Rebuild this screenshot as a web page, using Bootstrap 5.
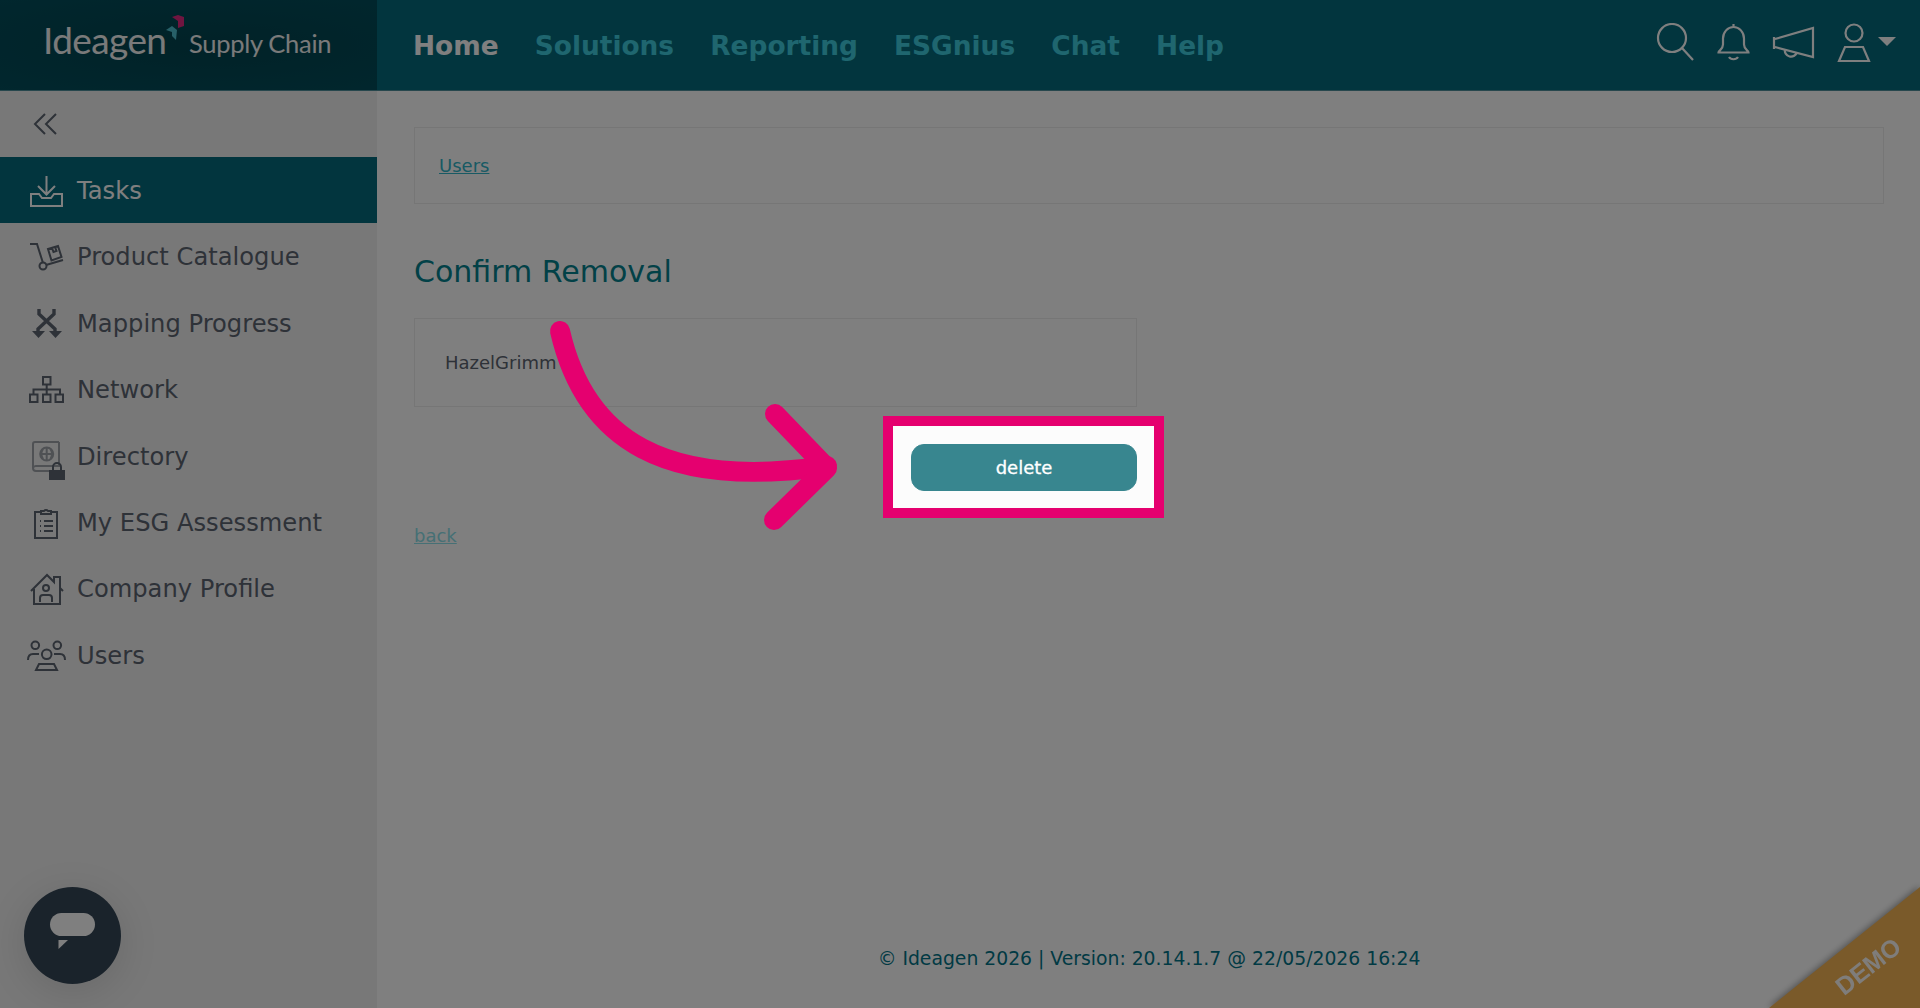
<!DOCTYPE html>
<html lang="en">
<head>
  <meta charset="UTF-8">
  <title>Ideagen Supply Chain - Confirm Removal</title>
  <meta name="viewport" content="width=device-width, initial-scale=1">
  <link href="https://cdn.jsdelivr.net/npm/bootstrap@5.3.0/dist/css/bootstrap.min.css" rel="stylesheet">
  <style>
    html, body { height: 100%; }
    body { font-family: "DejaVu Sans", sans-serif; font-size: 18px; background: #fff; overflow: hidden; color: #5c6470; }

    /* header */
    .top-bar { height: 91px; background: #046a7c; border-bottom: 1px solid #4f8f9a; flex-shrink: 0; }
    .logo-box { width: 377px; height: 90px; background: radial-gradient(ellipse at 55% 50%, #02444f 0%, #024e5c 100%); position: relative; }
    .logo-main { position: absolute; left: 43px; top: 13px; font-family: Lato, sans-serif; font-weight: 400; font-size: 37px; letter-spacing: -.6px; color: #f4f4f4; line-height: 54px; }
    .logo-sub { position: absolute; left: 189px; top: 23px; font-family: Lato, sans-serif; font-weight: 400; font-size: 25.5px; letter-spacing: -.3px; color: #f4f4f4; line-height: 40px; }
    .logo-mark { position: absolute; left: 0; top: 0; }
    .main-nav { padding-left: 36px; gap: 36.200px; }
    .main-nav a { font-size: 26.4px; font-weight: 700; color: #3eccdf; text-decoration: none; line-height: 92px; }
    .main-nav a.is-on { color: #fff; }
    .top-icons { padding-right: 18px; color: #fff; }
    .top-icons svg { display: block; height: 44px; fill: none; stroke: currentColor; stroke-width: 2.2; }

    /* sidebar */
    .side-col { width: 377px; background: #f0f0f0; flex-shrink: 0; }
    .side-toggle { height: 66px; padding-left: 33px; color: #5c6470; }
    .side-link { height: 66.4px; padding: 2px 0 0 28px; gap: 9px; font-size: 24.2px; color: #5c6470; }
    .side-link:hover { color: #5c6470; }
    .side-link.is-on { background: #046a7c; color: #fff; }
    .side-link svg { width: 40px; height: 46px; flex-shrink: 0; overflow: visible; fill: none; stroke: currentColor; stroke-width: 2; }
    .side-link svg .heavy { stroke-width: 3.4; }

    /* main */
    .content-col { padding: 36px 36px 0 37px; min-width: 0; }
    .crumb-box { height: 77px; border: 1px solid #ececec; padding-left: 24px; }
    .crumb-box a { color: #30b4c8; }
    .page-title { font-size: 30px; font-weight: 400; color: #04828f; margin: 50px 0 0; line-height: 36px; }
    .user-box { width: 723px; height: 89px; margin-top: 28px; border: 1px solid #ececec; padding-left: 30px; color: #5c6470; }
    .action-row { width: 723px; margin-top: 9px; }
    .spot-box { position: relative; z-index: 20; margin-right: -27px; border: 10px solid #e5006f; padding: 18px 17px 17px 18px; background: #fcfcfc; box-shadow: 0 0 0 3000px rgba(0,0,0,.5); }
    .btn-delete { width: 226px; height: 47px; padding: 0; border-radius: 13px; background: #38868f; border-color: #38868f; color: #fff; font-size: 18px; -webkit-text-stroke: .3px #fff; }
    .back-link { display: inline-block; margin-top: 4px; color: #8ce0ea; }
    .page-foot { padding-bottom: 36px; font-size: 18.8px; color: #027488; line-height: 27px; }

    /* things lying over the page */
    .chat-bubble { position: fixed; left: 24px; bottom: 24px; width: 97px; height: 97px; z-index: 5; border-radius: 50%; background: #344656; box-shadow: 0 8px 40px rgba(0,0,0,.12); }
    .chat-bubble svg { display: block; }
    .demo-tag { position: fixed; right: 0; bottom: 0; width: 151px; height: 121px; z-index: 5; filter: drop-shadow(-1px -1px 3px rgba(0,0,0,.35)); }
    .demo-fill { width: 100%; height: 100%; background: #f4b454; clip-path: polygon(100% 0, 100% 100%, 0 100%); position: relative; }
    .demo-text { position: absolute; left: 54px; top: 65px; width: 90px; text-align: center; font-family: "Liberation Sans", sans-serif; font-weight: 700; font-size: 25px; line-height: 28px; color: #fff; opacity: .95; transform: rotate(-38deg); }
    .pointer-arrow { position: fixed; left: 0; top: 0; z-index: 30; pointer-events: none; }
  </style>
</head>
<body class="d-flex flex-column">

  <!-- Header -->
  <header class="top-bar d-flex">
    <div class="logo-box">
      <span class="logo-main">Ideagen</span>
      <span class="logo-sub">Supply Chain</span>
      <svg class="logo-mark" width="200" height="50">
        <polygon points="172,17 178,15 184,17 184,26 178,28 178,21" fill="#e02a80"/>
        <polygon points="166,30 172,26 177,30 176,40 172,36 172,32" fill="#4ec0d0"/>
      </svg>
    </div>
    <nav class="main-nav d-flex">
      <a href="#" class="is-on">Home</a>
      <a href="#">Solutions</a>
      <a href="#">Reporting</a>
      <a href="#">ESGnius</a>
      <a href="#">Chat</a>
      <a href="#">Help</a>
    </nav>
    <div class="top-icons d-flex align-items-center ms-auto">
      <svg width="58" viewBox="0 0 58 44"><circle cx="16" cy="15" r="14"/><path d="M26 25l11 12"/></svg>
      <svg width="56" viewBox="0 0 56 44"><path d="M19.5 1v3M4.5 29.5c0-2 4.5-3 4.5-8v-6a10.5 11.5 0 0 1 21 0v6c0 5 4.5 6 4.5 8z"/><path d="M15 34a5 4 0 0 0 9 0"/></svg>
      <svg width="66" viewBox="0 0 66 44"><path d="M4 14v12M5 16L43 5v29L5 24M15 26a6 6 0 0 0 12 3"/></svg>
      <svg width="42" viewBox="0 0 42 44"><circle cx="18" cy="10" r="8.5"/><path d="M9 24h18l6 14H3z"/></svg>
      <svg width="24" viewBox="0 0 24 44"><polygon points="0,14 18,14 9,23" fill="currentColor" stroke="none"/></svg>
    </div>
  </header>

  <div class="d-flex flex-grow-1">
    <!-- Sidebar -->
    <aside class="side-col">
      <div class="side-toggle d-flex align-items-center">
        <svg width="26" height="26" viewBox="0 0 26 26" fill="none" stroke="currentColor" stroke-width="2"><path d="M12 3L2 13l10 10M23 3L13 13l10 10"/></svg>
      </div>
      <nav class="nav flex-column">
        <a class="nav-link side-link is-on d-flex align-items-center" href="#">
          <svg viewBox="0 -5 40 46"><path d="M18.5 3v18M10 13l8.5 8.500L27 13M3 21h8l3 4h9l3-4h8v12H3z"/></svg>Tasks
        </a>
        <a class="nav-link side-link d-flex align-items-center" href="#">
          <svg viewBox="0 -5 40 46"><path d="M2 4h7l6 19M18 25l17-5M20 9l10-3 3.500 11-10 3.500zM24 8l1.500 4 3-1-1.500-4"/><circle cx="15" cy="26" r="3.500"/></svg>Product Catalogue
        </a>
        <a class="nav-link side-link d-flex align-items-center" href="#">
          <svg viewBox="0 -5 40 46"><path class="heavy" d="M11 3v5l16 15v4M26 3v5L10 23v4"/><path d="M4 25h13l-6.500 7zM21 25h13l-6.500 7z" fill="currentColor" stroke="none"/></svg>Mapping Progress
        </a>
        <a class="nav-link side-link d-flex align-items-center" href="#">
          <svg viewBox="0 -5 40 46"><path d="M15 5h7.500v7.500H15zM2 22.500h7.500V30H2zM15 22.500h7.500V30H15zM27.500 22.500H35V30h-7.500zM18.700 12.500v10M5.500 22.500v-5h26.500v5"/></svg>Network
        </a>
        <a class="nav-link side-link d-flex align-items-center" href="#">
          <svg viewBox="0 -5 40 46"><g opacity=".55"><path d="M31 3H7a2 2 0 0 0-2 2v24a3 3 0 0 0 3 3h15M31 3v24H8a3 3 0 0 0-3 2"/><circle cx="18.700" cy="15" r="6.500"/><path d="M12.200 15h13M18.700 8.500v13M15 10c-2 3-2 7 0 10M22.400 10c2 3 2 7 0 10"/></g><path d="M21 31h16v10H21z" fill="currentColor" stroke="none"/><path d="M25 31v-3a4 4 0 0 1 8 0v3"/></svg>Directory
        </a>
        <a class="nav-link side-link d-flex align-items-center" href="#">
          <svg viewBox="0 -5 40 46"><path d="M13 7H7v26h22V7h-6M13 9V6h3a2.500 2.500 0 0 1 4 0h3v3zM12 16h1M12 21h1M12 26h1M16 16h9M16 21h9M16 26h9"/></svg>My ESG Assessment
        </a>
        <a class="nav-link side-link d-flex align-items-center" href="#">
          <svg viewBox="0 -5 40 46"><path d="M3 19L19 3l7 7V5h6v11l3 3M6 17v15h26V14M12 30v-4a3 3 0 0 1 3-3h6a3 3 0 0 1 3 3v4"/><circle cx="18" cy="16" r="3"/></svg>Company Profile
        </a>
        <a class="nav-link side-link d-flex align-items-center" href="#">
          <svg viewBox="0 -5 40 46"><circle cx="7.300" cy="7.300" r="3.800"/><circle cx="29.300" cy="7.300" r="3.800"/><circle cx="18.700" cy="16.300" r="4.800"/><path d="M0 22c0-4 2-6 5-6h6M37 22c0-4-2-6-5-6h-6M11 26h15l3 6H8z"/></svg>Users
        </a>
      </nav>
    </aside>

    <!-- Content -->
    <main class="content-col flex-grow-1 d-flex flex-column">
      <div class="crumb-box d-flex align-items-center">
        <a href="#">Users</a>
      </div>
      <h1 class="page-title">Confirm Removal</h1>
      <div class="user-box d-flex align-items-center">HazelGrimm</div>
      <div class="action-row d-flex justify-content-end">
        <div class="spot-box">
          <button type="button" class="btn btn-delete d-block">delete</button>
        </div>
      </div>
      <div><a href="#" class="back-link">back</a></div>
      <footer class="page-foot mt-auto text-center">© Ideagen 2026 | Version: 20.14.1.7 @ 22/05/2026 16:24</footer>
    </main>
  </div>

  <!-- Chat launcher -->
  <div class="chat-bubble">
    <svg width="97" height="97" viewBox="0 0 97 97"><rect x="26" y="26" width="45" height="23" rx="11.500" fill="#fff"/><polygon points="34.500,53 44,53 34.500,62" fill="#fff"/></svg>
  </div>

  <!-- Demo corner -->
  <div class="demo-tag">
    <div class="demo-fill"><span class="demo-text">DEMO</span></div>
  </div>

  <!-- Pointer arrow -->
  <svg class="pointer-arrow" width="1920" height="1008" fill="none" stroke="#e5006f" stroke-width="20" stroke-linecap="round" stroke-linejoin="round">
    <path d="M560 331C585 440 665 490 827 466"/>
    <path d="M775 414L827 468L774 520"/>
  </svg>

</body>
</html>
